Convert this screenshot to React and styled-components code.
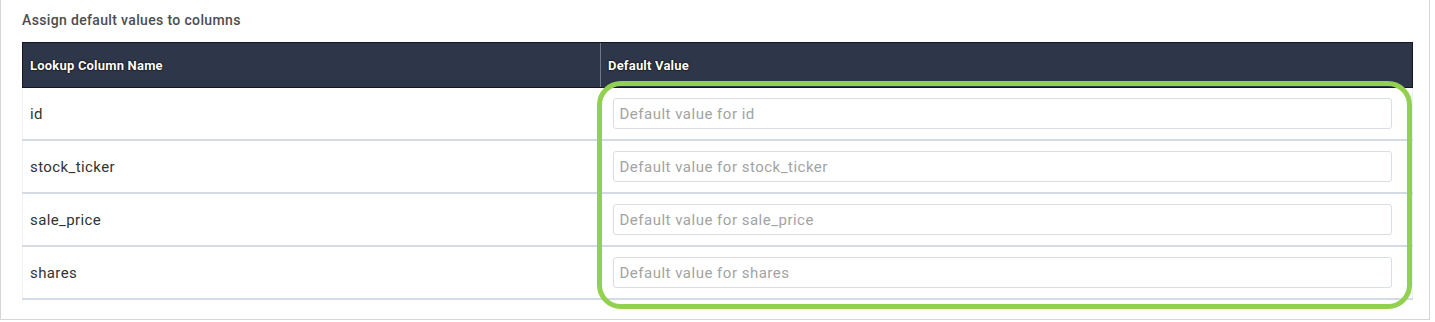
import React from "react";
import styled, { createGlobalStyle } from "styled-components";

const GlobalStyle = createGlobalStyle`
  html, body {
    margin: 0;
    padding: 0;
    background: #ffffff;
    font-family: Roboto, "Liberation Sans", sans-serif;
  }
`;

const Panel = styled.div`
  position: relative;
  width: 1430px;
  box-sizing: border-box;
  border: 1px solid #d6d6d6;
  border-top: none;
  padding: 12px 17px 19px 21px;
  background: #ffffff;
`;

const Title = styled.p`
  margin: 0 0 14px;
  font-size: 14px;
  line-height: 16px;
  font-weight: 500;
  letter-spacing: 0.35px;
  color: #4d4d4d;
`;

const Table = styled.table`
  width: 1391px;
  border-collapse: collapse;
  table-layout: fixed;
`;

const HeadCell = styled.th`
  height: 44px;
  padding: 0 7px;
  text-align: left;
  background: #2e3649;
  border-top: 1px solid #14171f;
  border-bottom: 1px solid #14171f;
  border-left: 1px solid ${(p) => (p.$first ? "#14171f" : "#6f7685")};
  border-right: ${(p) => (p.$last ? "1px solid #14171f" : "none")};
  color: #ffffff;
  font-size: 13px;
  font-weight: 700;
  letter-spacing: 0.2px;
  text-shadow: 0 0 2px #000000, 0 0 1px #000000;
`;

const Row = styled.tr`
  border-bottom: 2px solid #d5dbe4;
`;

const Cell = styled.td`
  height: 51px;
  padding: 0 ${(p) => (p.$input ? "20px 0 12px" : "7px")};
  border-left: ${(p) => (p.$first ? "1px solid #eef1f5" : "none")};
  border-right: ${(p) => (p.$last ? "1px solid #eef1f5" : "none")};
  font-size: 15px;
  letter-spacing: 0.4px;
  color: #333333;
`;

const Input = styled.input`
  display: block;
  width: 100%;
  height: 31px;
  box-sizing: border-box;
  border: 1px solid #d9dee5;
  border-radius: 3px;
  padding: 0 6px;
  font-family: Roboto, "Liberation Sans", sans-serif;
  font-size: 15px;
  letter-spacing: 0.5px;
  color: #333333;
  outline: none;

  &::placeholder {
    color: #a3a3a3;
  }
`;

const Highlight = styled.div`
  position: absolute;
  left: 596px;
  top: 81px;
  width: 815px;
  height: 228px;
  box-sizing: border-box;
  border: 5px solid #92d050;
  border-radius: 24px;
  pointer-events: none;
`;

const columns = ["id", "stock_ticker", "sale_price", "shares"];

const App = () => (
  <>
    <GlobalStyle />
    <Panel>
      <Title>Assign default values to columns</Title>
      <Table>
        <colgroup>
          <col style={{ width: 578 }} />
          <col />
        </colgroup>
        <thead>
          <tr>
            <HeadCell $first>Lookup Column Name</HeadCell>
            <HeadCell $last>Default Value</HeadCell>
          </tr>
        </thead>
        <tbody>
          {columns.map((name) => (
            <Row key={name}>
              <Cell $first>{name}</Cell>
              <Cell $input $last>
                <Input placeholder={`Default value for ${name}`} />
              </Cell>
            </Row>
          ))}
        </tbody>
      </Table>
      <Highlight />
    </Panel>
  </>
);

export default App;
